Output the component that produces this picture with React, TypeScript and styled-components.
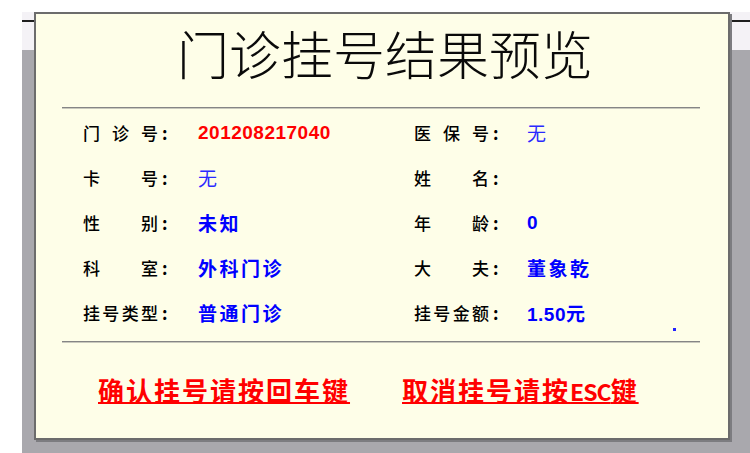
import React from 'react';
import styled, { createGlobalStyle } from 'styled-components';

const GlobalStyle = createGlobalStyle`
    html, body {
        margin: 0;
        padding: 0;
        background: #ffffff;
    }
    body {
        font-family: "Noto Sans CJK SC", "Noto Sans", sans-serif;
    }
`;

const Page = styled.div`
    width: 750px;
    height: 453px;
    box-sizing: border-box;
    padding: 12px 0 0 22px;
    background: #ffffff;
    overflow: hidden;
`;

const Desktop = styled.div`
    position: relative;
    height: 100%;
    background: #a9a8ad;
`;

const TopBand = styled.div`
    height: 38px;
    background: #f4f2f6;
    box-sizing: border-box;
    padding-top: 8px;
`;

const BandLine = styled.div`
    height: 2px;
    background: #1e1e1e;
`;

const Dialog = styled.div`
    position: absolute;
    left: 12px;
    top: 0;
    width: 696px;
    height: 428px;
    box-sizing: border-box;
    border: 2px solid #6c6c6c;
    background: #fefee8;
    box-shadow: 2px 2px 0 #7c7c80;
    display: flex;
    flex-direction: column;
`;

const Title = styled.div`
    margin-top: 13px;
    height: 52px;
    line-height: 52px;
    text-align: center;
    font-size: 52px;
    font-weight: 300;
    color: #0a0a0a;
    padding-left: 6px;
`;

const Rule = styled.div<{ $top: number }>`
    margin: ${p => p.$top}px 28px 0 26px;
    height: 0;
    border-top: 1px solid #858585;
    border-bottom: 1px solid #c9c9bd;
`;

const InfoGrid = styled.div`
    margin-top: 1px;
    padding-left: 47px;
    display: grid;
    grid-template-columns: 115px 216px 113px 1fr;
    grid-auto-rows: 45px;
    align-items: center;
`;

const LabelCell = styled.div`
    display: flex;
    align-items: center;
    font-size: 17px;
    font-weight: 500;
    color: #000000;
`;

const LabelChars = styled.span`
    display: flex;
    justify-content: space-between;
    width: 75px;
`;

const Colon = styled.span`
    margin-left: 4px;
    font-weight: 700;
`;

const Value = styled.div<{ $color: string; $bold?: boolean; $latin?: boolean }>`
    color: ${p => p.$color};
    font-weight: ${p => (p.$bold ? 700 : 400)};
    font-size: 19px;
    letter-spacing: ${p => (p.$latin ? '0.5px' : '2.5px')};
    font-family: ${p =>
        p.$latin
            ? '"Liberation Sans", "Noto Sans CJK SC", sans-serif'
            : '"Noto Sans CJK SC", sans-serif'};
`;

const Actions = styled.div`
    padding: 34px 0 0 62px;
    display: flex;
    gap: 52px;
`;

const ActionLink = styled.span`
    font-size: 26px;
    line-height: 26px;
    font-weight: 700;
    color: #ff0000;
    letter-spacing: 2px;
    text-decoration: underline;
    text-decoration-thickness: 2px;
    text-underline-offset: 1px;
`;

const Latin = styled.span`
    font-size: 23px;
    letter-spacing: -1px;
`;

const Dot = styled.span`
    position: absolute;
    left: 637px;
    top: 314px;
    width: 3px;
    height: 3px;
    background: #2323ff;
`;

type Item = {
    label: string;
    value?: string;
    color?: string;
    bold?: boolean;
    latin?: boolean;
};

const BLUE = '#0000ff';
const LIGHT_BLUE = '#2a2aff';

const items: Item[] = [
    { label: '门诊号', value: '201208217040', color: '#ff0000', bold: true, latin: true },
    { label: '医保号', value: '无', color: LIGHT_BLUE },
    { label: '卡号', value: '无', color: LIGHT_BLUE },
    { label: '姓名' },
    { label: '性别', value: '未知', color: BLUE, bold: true },
    { label: '年龄', value: '0', color: BLUE, bold: true, latin: true },
    { label: '科室', value: '外科门诊', color: BLUE, bold: true },
    { label: '大夫', value: '董象乾', color: BLUE, bold: true },
    { label: '挂号类型', value: '普通门诊', color: BLUE, bold: true },
    { label: '挂号金额', value: '1.50元', color: BLUE, bold: true, latin: true },
];

const App = () => (
    <>
        <GlobalStyle />
        <Page>
            <Desktop>
                <TopBand>
                    <BandLine />
                </TopBand>
                <Dialog>
                    <Title>门诊挂号结果预览</Title>
                    <Rule $top={28} />
                    <InfoGrid>
                        {items.map(item => (
                            <React.Fragment key={item.label}>
                                <LabelCell>
                                    <LabelChars>
                                        {item.label.split('').map((ch, i) => (
                                            <span key={i}>{ch}</span>
                                        ))}
                                    </LabelChars>
                                    <Colon>:</Colon>
                                </LabelCell>
                                <Value
                                    $color={item.color || BLUE}
                                    $bold={item.bold}
                                    $latin={item.latin}
                                >
                                    {item.value || ''}
                                </Value>
                            </React.Fragment>
                        ))}
                    </InfoGrid>
                    <Rule $top={6} />
                    <Actions>
                        <ActionLink>确认挂号请按回车键</ActionLink>
                        <ActionLink>
                            取消挂号请按<Latin>ESC</Latin>键
                        </ActionLink>
                    </Actions>
                    <Dot />
                </Dialog>
            </Desktop>
        </Page>
    </>
);

export default App;
